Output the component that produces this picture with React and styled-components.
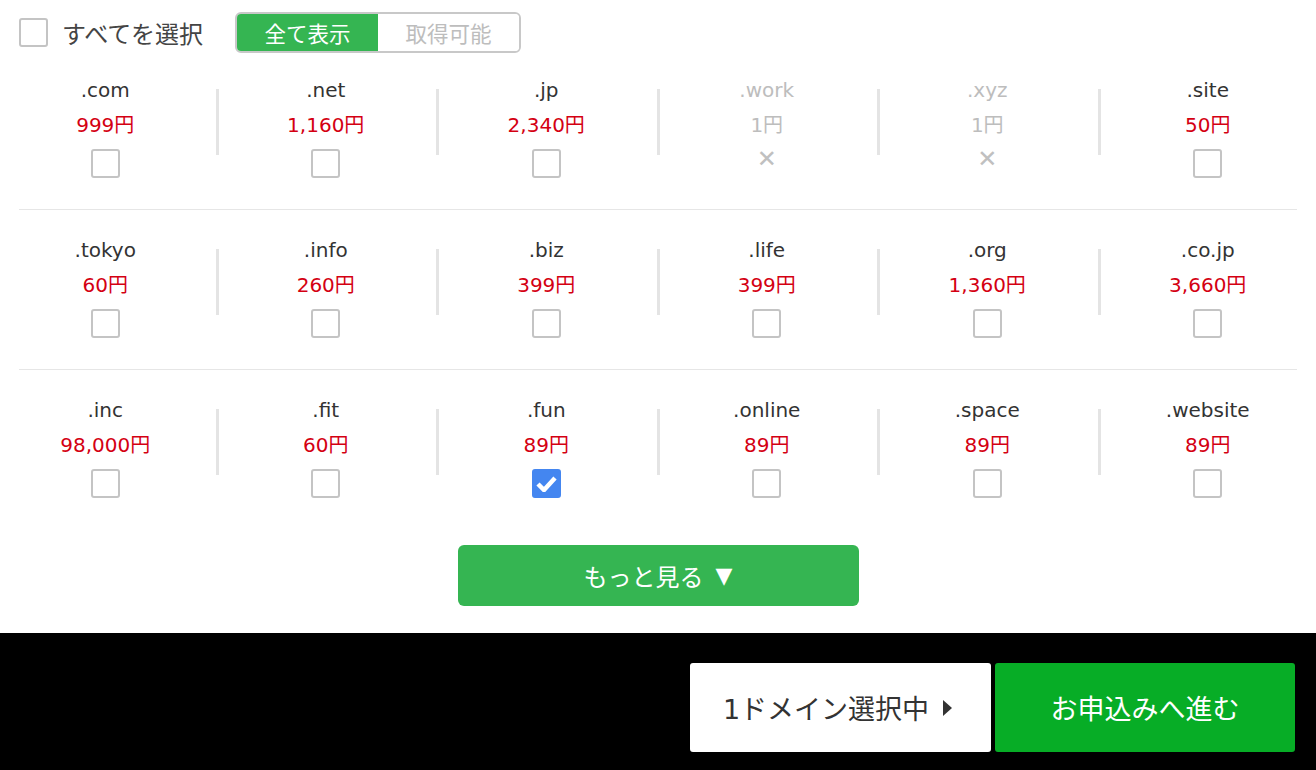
import styled, { createGlobalStyle } from "styled-components";

const GlobalStyle = createGlobalStyle`
  html, body {
    margin: 0;
    padding: 0;
    background: #fff;
    overflow: hidden;
  }
  body {
    font-family: "DejaVu Sans", "Noto Sans CJK JP", sans-serif;
    color: #333;
  }
  * {
    box-sizing: border-box;
  }
`;

const domains = [
  [
    { name: ".com", price: "999円" },
    { name: ".net", price: "1,160円" },
    { name: ".jp", price: "2,340円" },
    { name: ".work", price: "1円", disabled: true },
    { name: ".xyz", price: "1円", disabled: true },
    { name: ".site", price: "50円" },
  ],
  [
    { name: ".tokyo", price: "60円" },
    { name: ".info", price: "260円" },
    { name: ".biz", price: "399円" },
    { name: ".life", price: "399円" },
    { name: ".org", price: "1,360円" },
    { name: ".co.jp", price: "3,660円" },
  ],
  [
    { name: ".inc", price: "98,000円" },
    { name: ".fit", price: "60円" },
    { name: ".fun", price: "89円", checked: true },
    { name: ".online", price: "89円" },
    { name: ".space", price: "89円" },
    { name: ".website", price: "89円" },
  ],
];

const Page = styled.div`
  width: 1316px;
  height: 770px;
  display: flex;
  flex-direction: column;
`;

const Toolbar = styled.div`
  height: 50px;
  padding: 12px 19px 0;
  display: flex;
  align-items: flex-start;
  gap: 32px;
`;

const SelectAll = styled.label`
  display: flex;
  align-items: center;
  gap: 14px;
  height: 41px;
  font-size: 24px;
  color: #444;
`;

const Box = styled.span`
  width: 29px;
  height: 29px;
  border: 2px solid #c4c4c4;
  border-radius: 3px;
  background: #fff;
  display: flex;
  align-items: center;
  justify-content: center;

  ${(p) =>
    p.$checked &&
    `
    background: #4486f0;
    border-color: #4486f0;
  `}
`;

const Toggle = styled.div`
  display: flex;
  height: 41px;
  border: 2px solid #c8c8c8;
  border-radius: 6px;
  overflow: hidden;
`;

const ToggleItem = styled.span`
  width: 141px;
  display: flex;
  align-items: center;
  justify-content: center;
  font-size: 21.5px;
  color: ${(p) => (p.$active ? "#fff" : "#bdbdbd")};
  background: ${(p) => (p.$active ? "#35b552" : "#fff")};
`;

const Row = styled.div`
  margin: 0 19px;
  padding: 25px 0 31px;
  border-bottom: ${(p) => (p.$last ? "none" : "1px solid #e6e6e6")};
`;

const Grid = styled.div`
  display: grid;
  grid-template-columns: repeat(6, 220.5px);
  margin-left: -24px;
`;

const Cell = styled.div`
  position: relative;
  display: flex;
  flex-direction: column;
  align-items: center;

  ${(p) =>
    !p.$first &&
    `
    &::before {
      content: "";
      position: absolute;
      left: 0;
      top: 14px;
      width: 3px;
      height: 66px;
      background: #e4e4e4;
    }
  `}
`;

const Name = styled.div`
  height: 30px;
  line-height: 30px;
  font-size: 20px;
  color: ${(p) => (p.$disabled ? "#bdbdbd" : "#333")};
`;

const Price = styled.div`
  margin-top: 5px;
  height: 30px;
  line-height: 30px;
  font-size: 20px;
  color: ${(p) => (p.$disabled ? "#bdbdbd" : "#d40012")};
`;

const CheckSlot = styled.div`
  margin-top: 9px;
  height: 29px;
  display: flex;
  align-items: flex-start;
  justify-content: center;
`;

const Cross = styled.span`
  font-size: 24px;
  line-height: 20px;
  font-weight: bold;
  color: #c0c0c0;
`;

const MoreWrap = styled.div`
  padding: 16px 0 27px;
  display: flex;
  justify-content: center;
`;

const MoreButton = styled.button`
  width: 401px;
  height: 61px;
  border: none;
  border-radius: 6px;
  background: #35b552;
  color: #fff;
  font-family: inherit;
  font-size: 24px;
  display: flex;
  align-items: center;
  justify-content: center;
  gap: 12px;
`;

const Arrow = styled.span`
  font-size: 22px;
`;

const Footer = styled.div`
  flex: 1;
  background: #000;
  padding: 30px 21px 18px;
  display: flex;
  justify-content: flex-end;
  gap: 4px;
`;

const FooterButton = styled.button`
  width: ${(p) => (p.$primary ? "300px" : "301px")};
  height: 89px;
  padding: ${(p) => (p.$primary ? "0" : "0 6px 0 0")};
  border: none;
  border-radius: 3px;
  background: ${(p) => (p.$primary ? "#07ad26" : "#fff")};
  color: ${(p) => (p.$primary ? "#fff" : "#333")};
  font-family: inherit;
  font-size: 27px;
  display: flex;
  align-items: center;
  justify-content: center;
  gap: 14px;
`;

const Check = () => (
  <svg width="21" height="17" viewBox="0 0 21 17">
    <path d="M2 9 L8 15 L19 3" fill="none" stroke="#fff" strokeWidth="4.5" />
  </svg>
);

const Caret = () => (
  <svg width="9" height="16" viewBox="0 0 9 16">
    <path d="M0 0 L9 8 L0 16 Z" fill="#333" />
  </svg>
);

const DomainCell = ({ item, first }) => (
  <Cell $first={first}>
    <Name $disabled={item.disabled}>{item.name}</Name>
    <Price $disabled={item.disabled}>{item.price}</Price>
    <CheckSlot>
      {item.disabled ? (
        <Cross>✕</Cross>
      ) : (
        <Box $checked={item.checked}>{item.checked && <Check />}</Box>
      )}
    </CheckSlot>
  </Cell>
);

export default function App() {
  return (
    <Page>
      <GlobalStyle />
      <Toolbar>
        <SelectAll>
          <Box />
          すべてを選択
        </SelectAll>
        <Toggle>
          <ToggleItem $active>全て表示</ToggleItem>
          <ToggleItem>取得可能</ToggleItem>
        </Toggle>
      </Toolbar>
      {domains.map((row, i) => (
        <Row key={i} $last={i === domains.length - 1}>
          <Grid>
            {row.map((item, j) => (
              <DomainCell key={item.name} item={item} first={j === 0} />
            ))}
          </Grid>
        </Row>
      ))}
      <MoreWrap>
        <MoreButton>
          もっと見る
          <Arrow>▼</Arrow>
        </MoreButton>
      </MoreWrap>
      <Footer>
        <FooterButton>
          1ドメイン選択中
          <Caret />
        </FooterButton>
        <FooterButton $primary>お申込みへ進む</FooterButton>
      </Footer>
    </Page>
  );
}
